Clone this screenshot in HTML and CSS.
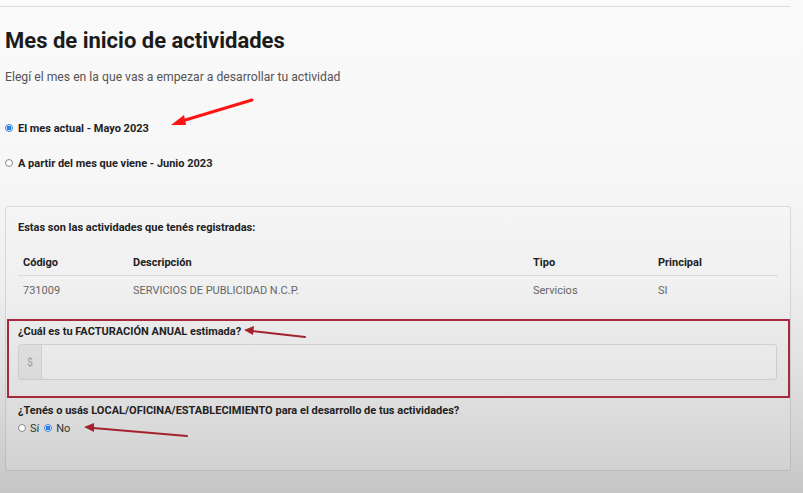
FILE: index.html
```html
<!DOCTYPE html>
<html lang="es">
<head>
<meta charset="utf-8">
<title>Mes de inicio de actividades</title>
<link rel="stylesheet" href="styles.css">
</head>
<body>
<div class="page">
  <div class="topline"></div>
  <h1 class="title">Mes de inicio de actividades</h1>
  <p class="subtitle">Elegí el mes en la que vas a empezar a desarrollar tu actividad</p>

  <div class="radio-row first">
    <span class="radio checked"></span>
    <span class="radio-label">El mes actual - Mayo 2023</span>
  </div>
  <div class="radio-row second">
    <span class="radio"></span>
    <span class="radio-label">A partir del mes que viene - Junio 2023</span>
  </div>

  <div class="panel">
    <p class="panel-title">Estas son las actividades que tenés registradas:</p>
    <table class="acts">
      <thead>
        <tr><th class="c1">Código</th><th class="c2">Descripción</th><th class="c3">Tipo</th><th class="c4">Principal</th></tr>
      </thead>
      <tbody>
        <tr><td>731009</td><td>SERVICIOS DE PUBLICIDAD N.C.P.</td><td>Servicios</td><td>SI</td></tr>
      </tbody>
    </table>

    <div class="highlight">
      <p class="q-label">¿Cuál es tu FACTURACIÓN ANUAL estimada?</p>
      <div class="input-group">
        <span class="addon">$</span>
        <span class="field"></span>
      </div>
    </div>

    <p class="q-label local">¿Tenés o usás LOCAL/OFICINA/ESTABLECIMIENTO para el desarrollo de tus actividades?</p>
    <div class="inline-radios">
      <span class="radio"></span><span class="opt">Sí</span>
      <span class="radio checked"></span><span class="opt">No</span>
    </div>
  </div>
</div>

<svg class="annotations" width="803" height="493" viewBox="0 0 803 493">
  <line x1="252" y1="100" x2="182" y2="121" stroke="#ff1414" stroke-width="3" stroke-linecap="round"/>
  <polygon points="171,125 184,115 186,125" fill="#ff1414"/>
  <line x1="305" y1="337" x2="252" y2="331" stroke="#a3222c" stroke-width="2" stroke-linecap="round"/>
  <polygon points="244,330 254,326 253,335" fill="#a3222c"/>
  <line x1="187" y1="436" x2="93" y2="428" stroke="#a3222c" stroke-width="2" stroke-linecap="round"/>
  <polygon points="84,427 94,423 94,432" fill="#a3222c"/>
</svg>
</body>
</html>
```
FILE: styles.css
```css
html, body {
  margin: 0;
  padding: 0;
}
body {
  width: 803px;
  height: 493px;
  overflow: hidden;
  position: relative;
  font-family: Roboto, "Liberation Sans", Arial, sans-serif;
  color: #222;
  background: linear-gradient(to bottom, #fafafa 0%, #f7f7f7 35%, #eeeeee 58%, #e0e0e0 76%, #cfcfcf 92%, #c6c6c6 100%);
}
.page {
  padding: 0 12px 0 5px;
}
.topline {
  margin: 6px 0 0 -5px;
  width: 790px;
  height: 1px;
  background: #dcdcdc;
}
.title {
  margin: 21px 0 0;
  font-size: 22px;
  line-height: 26px;
  font-weight: 700;
  color: #1b1b1b;
}
.subtitle {
  margin: 15px 0 0;
  font-size: 12.2px;
  line-height: 16px;
  color: #555;
}
.radio-row {
  display: flex;
  align-items: center;
  height: 14px;
}
.radio-row.first { margin-top: 36px; }
.radio-row.second { margin-top: 21px; }
.radio {
  display: inline-block;
  box-sizing: border-box;
  width: 8px;
  height: 8px;
  border-radius: 50%;
  border: 1px solid #888;
  background: #fff;
  flex: none;
}
.radio.checked {
  border: 1px solid #3b82e6;
  background: radial-gradient(circle, #2f7bea 0 2.2px, #fff 2.6px);
}
.radio-label {
  margin-left: 5px;
  font-size: 11px;
  font-weight: 700;
  color: #222;
}
.panel {
  margin-top: 36px;
  box-sizing: border-box;
  width: 786px;
  height: 265px;
  border: 1px solid rgba(0, 0, 0, 0.11);
  border-radius: 3px;
  background: rgba(255, 255, 255, 0.12);
  padding: 1px 12px 0 12px;
}
.panel-title {
  margin: 13px 0 0;
  font-size: 11px;
  line-height: 14px;
  font-weight: 700;
  color: #222;
}
.acts {
  margin-top: 14px;
  width: 760px;
  border-collapse: collapse;
  font-size: 11px;
}
.acts th, .acts td {
  text-align: left;
  padding: 0 5px;
}
.acts th {
  font-weight: 700;
  color: #222;
  height: 26px;
  vertical-align: middle;
  border-bottom: 1px solid #dadada;
}
.acts td {
  color: #666;
  height: 28px;
}
.acts .c1 { width: 100px; }
.acts .c2 { width: 390px; }
.acts .c3 { width: 115px; }
.highlight {
  margin: 15px -12px 0 -11px;
  border: 2px solid #a8293a;
  height: 79px;
  box-sizing: border-box;
  padding: 0 11px 0 9px;
}
.q-label {
  margin: 0;
  font-size: 11px;
  line-height: 14px;
  font-weight: 700;
  color: #222;
}
.highlight .q-label { margin-top: 4px; }
.input-group {
  margin-top: 5px;
  display: flex;
  height: 36px;
  box-sizing: border-box;
  border: 1px solid rgba(0, 0, 0, 0.1);
  border-radius: 3px;
  overflow: hidden;
}
.addon {
  width: 22px;
  display: flex;
  align-items: center;
  justify-content: center;
  background: rgba(0, 0, 0, 0.04);
  color: #999;
  font-size: 10px;
  border-right: 1px solid rgba(0, 0, 0, 0.05);
}
.field {
  flex: 1;
  background: rgba(255, 255, 255, 0.15);
}
.q-label.local { margin-top: 6px; }
.inline-radios {
  margin-top: 3px;
  display: flex;
  align-items: center;
  font-size: 11px;
  color: #333;
  height: 14px;
}
.inline-radios .opt { margin: 0 5px 0 4px; }
.annotations {
  position: absolute;
  left: 0;
  top: 0;
  pointer-events: none;
}
```
